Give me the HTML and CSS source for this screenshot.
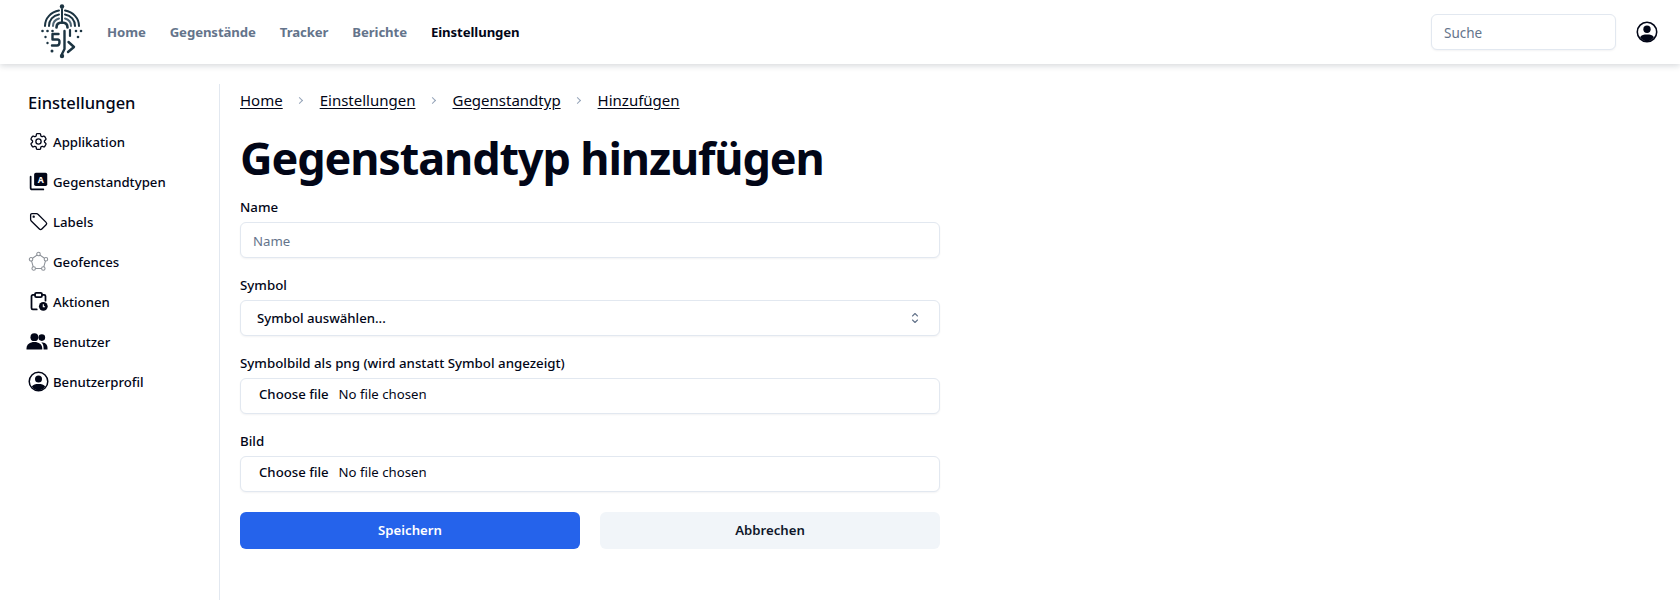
FILE: index.html
```html
<!DOCTYPE html>
<html lang="de">
<head>
<meta charset="utf-8">
<title>Gegenstandtyp hinzufügen</title>
<link rel="stylesheet" href="styles.css">
</head>
<body>
<header class="navbar">
  <svg class="logo" viewBox="0 0 44 56" fill="none" stroke="#1c3442" stroke-linecap="round">
    <circle cx="22" cy="2.500" r="2.200" fill="#1c3442" stroke="none"/>
    <path d="M22 5V19" stroke-width="2"/>
    <path d="M5 22C5 14 11 8 19 6.500M39 22C39 14 33 8 25 6.500" stroke-width="2"/>
    <path d="M9 22C9 16 13 11.500 19 10.500M35 22C35 16 31 11.500 25 10.500" stroke-width="2"/>
    <path d="M13 22C13 18 15.500 15.500 19 14.500M31 22C31 18 28.500 15.500 25 14.500" stroke="#4f6675" stroke-width="2"/>
    <path d="M16.500 23.500C16.500 20 19 18.500 22 18.500C25 18.500 27.500 20 27.500 23.500" stroke-width="2.600"/>
    <path d="M30 26V32" stroke-width="2.200"/>
    <path d="M18.500 30H12.500V35.500H17.500C19 35.500 19.500 36.500 19.500 38C19.500 40 18.500 41.500 17 41.500H12" stroke-width="2.400" stroke-linejoin="round"/>
    <path d="M24.500 27V45L22 50" stroke-width="2.400" stroke-linejoin="round"/>
    <path d="M28.500 38L34 43L28 48" stroke-width="2.400" stroke-linejoin="round"/>
    <g fill="#1c3442" stroke="none">
      <circle cx="2.500" cy="27" r="1.300"/><circle cx="7.500" cy="27" r="1.300"/><circle cx="12.500" cy="27" r="1.300"/>
      <circle cx="36" cy="27" r="1.300"/><circle cx="41" cy="27" r="1.300"/>
      <circle cx="5.500" cy="33" r="1.200"/><circle cx="7.500" cy="39" r="1.200"/><circle cx="38" cy="33" r="1.300"/>
      <circle cx="12" cy="47" r="1.500"/><circle cx="22" cy="52" r="2.200"/>
    </g>
  </svg>
  <nav class="nav-links">
    <a class="nav-link" href="#">Home</a>
    <a class="nav-link" href="#">Gegenstände</a>
    <a class="nav-link" href="#">Tracker</a>
    <a class="nav-link" href="#">Berichte</a>
    <a class="nav-link active" href="#">Einstellungen</a>
  </nav>
  <div class="nav-end">
    <input class="search" type="text" placeholder="Suche">
    <svg class="profile" viewBox="0 0 24 24"><use href="#i-user"/></svg>
  </div>
</header>

<svg class="defs" aria-hidden="true">
  <symbol id="i-user" viewBox="0 0 24 24">
    <circle cx="12" cy="12" r="10.600" fill="none" stroke="currentColor" stroke-width="1.700"/>
    <circle cx="12" cy="9" r="4" fill="currentColor"/>
    <path d="M4.400 17.600C6 15.400 8.500 14.800 12 14.800S18 15.400 19.600 17.600C17.700 20.600 15 22 12 22S6.300 20.600 4.400 17.600Z" fill="currentColor"/>
  </symbol>
</svg>

<div class="page">
  <aside class="sidebar">
    <h2 class="side-title">Einstellungen</h2>
    <ul class="side-list">
      <li class="side-item">
        <svg class="side-icon" viewBox="0 0 24 24" fill="none" stroke="currentColor" stroke-width="1.500" stroke-linecap="round" stroke-linejoin="round"><path d="M9.594 3.940c.09-.542.56-.94 1.110-.94h2.593c.55 0 1.020.398 1.110.94l.213 1.281c.063.374.313.686.645.870.074.04.147.083.22.127.325.196.72.257 1.075.124l1.217-.456a1.125 1.125 0 0 1 1.370.49l1.296 2.247a1.125 1.125 0 0 1-.26 1.431l-1.003.827c-.293.241-.438.613-.43.992a7.723 7.723 0 0 1 0 .255c-.008.378.137.75.43.991l1.004.827c.424.35.534.955.26 1.430l-1.298 2.247a1.125 1.125 0 0 1-1.369.491l-1.217-.456c-.355-.133-.75-.072-1.076.124a6.470 6.470 0 0 1-.22.128c-.331.183-.581.495-.644.869l-.213 1.281c-.09.543-.56.94-1.110.94h-2.594c-.55 0-1.019-.398-1.110-.94l-.213-1.281c-.062-.374-.312-.686-.644-.870a6.520 6.520 0 0 1-.22-.127c-.325-.196-.72-.257-1.076-.124l-1.217.456a1.125 1.125 0 0 1-1.369-.49l-1.297-2.247a1.125 1.125 0 0 1 .26-1.431l1.004-.827c.292-.24.437-.613.43-.991a6.932 6.932 0 0 1 0-.255c.007-.38-.138-.751-.43-.992l-1.004-.827a1.125 1.125 0 0 1-.26-1.430l1.297-2.247a1.125 1.125 0 0 1 1.370-.491l1.216.456c.356.133.751.072 1.076-.124.072-.044.146-.086.22-.128.332-.183.582-.495.644-.869l.214-1.280Z"/><circle cx="12" cy="12" r="3"/></svg>
        <span>Applikation</span>
      </li>
      <li class="side-item">
        <svg class="side-icon" viewBox="0 0 24 24"><path d="M3 6.500V19a2 2 0 0 0 2 2h12.500" fill="none" stroke="currentColor" stroke-width="2" stroke-linecap="round"/><rect x="7" y="2" width="15" height="15" rx="2" fill="currentColor"/><text class="icon-letter" x="14.500" y="13.500" text-anchor="middle">A</text></svg>
        <span>Gegenstandtypen</span>
      </li>
      <li class="side-item">
        <svg class="side-icon" viewBox="0 0 24 24" fill="none" stroke="currentColor" stroke-width="1.500" stroke-linejoin="round" stroke-linecap="round"><path d="M3 4.500A1.500 1.500 0 0 1 4.500 3h5.300c.6 0 1.200.24 1.600.66l9.300 9.300a2 2 0 0 1 0 2.800l-4.900 4.900a2 2 0 0 1-2.800 0l-9.300-9.300A2.250 2.250 0 0 1 3 9.800Z"/><circle cx="6.500" cy="6.500" r=".6"/></svg>
        <span>Labels</span>
      </li>
      <li class="side-item">
        <svg class="side-icon muted" viewBox="0 0 24 24" fill="none" stroke="currentColor" stroke-width="1.200"><path d="M12 3.500L20.500 9.500L17.500 20H6.500L3.500 9.500Z"/><g fill="#fff"><circle cx="12" cy="3.500" r="2"/><circle cx="20.500" cy="9.500" r="2"/><circle cx="17.500" cy="20" r="2"/><circle cx="6.500" cy="20" r="2"/><circle cx="3.500" cy="9.500" r="2"/></g></svg>
        <span>Geofences</span>
      </li>
      <li class="side-item">
        <svg class="side-icon" viewBox="0 0 24 24"><path d="M10 21H5.500A1.500 1.500 0 0 1 4 19.500V6A1.500 1.500 0 0 1 5.500 4.500H8M16 4.500H18.500A1.500 1.500 0 0 1 20 6V11" fill="none" stroke="currentColor" stroke-width="2" stroke-linecap="round"/><rect x="8" y="2" width="8" height="5" rx="1.500" fill="none" stroke="currentColor" stroke-width="2"/><circle cx="17.500" cy="17.500" r="5" fill="currentColor"/><path d="M17.500 15V18H19.500" fill="none" stroke="#fff" stroke-width="1.300"/></svg>
        <span>Aktionen</span>
      </li>
      <li class="side-item">
        <svg class="side-icon wide" viewBox="0 0 24 24" fill="currentColor"><circle cx="9" cy="7" r="4.500"/><circle cx="17.500" cy="7.500" r="3.800"/><path d="M0 20C0 15 4 12.500 9 12.500S18 15 18 20V21H0Z"/><path d="M19.500 21H24V19C24 15 21 13 17 12.800C18.800 14.400 19.500 16.800 19.500 19.500Z"/></svg>
        <span>Benutzer</span>
      </li>
      <li class="side-item">
        <svg class="side-icon" viewBox="0 0 24 24"><use href="#i-user"/></svg>
        <span>Benutzerprofil</span>
      </li>
    </ul>
  </aside>

  <main class="content">
    <nav class="crumbs">
      <a href="#">Home</a><span class="sep"></span>
      <a href="#">Einstellungen</a><span class="sep"></span>
      <a href="#">Gegenstandtyp</a><span class="sep"></span>
      <a href="#">Hinzufügen</a>
    </nav>
    <h1 class="title">Gegenstandtyp hinzufügen</h1>
    <form class="form">
      <div class="field">
        <label class="label" for="f-name">Name</label>
        <input class="control text-input" id="f-name" type="text" placeholder="Name">
      </div>
      <div class="field">
        <label class="label" for="f-sym">Symbol</label>
        <div class="select-wrap">
          <select class="control select" id="f-sym"><option>Symbol auswählen...</option></select>
          <svg class="select-arrow" viewBox="0 0 10 14" fill="none" stroke="#64748b" stroke-width="1.100" stroke-linecap="round" stroke-linejoin="round"><path d="M2.500 5L5 2.500L7.500 5M2.500 9L5 11.500L7.500 9"/></svg>
        </div>
      </div>
      <div class="field">
        <span class="label">Symbolbild als png (wird anstatt Symbol angezeigt)</span>
        <label class="control file">
          <input class="file-input" type="file">
          <span class="file-btn">Choose file</span>
          <span>No file chosen</span>
        </label>
      </div>
      <div class="field">
        <span class="label">Bild</span>
        <label class="control file">
          <input class="file-input" type="file">
          <span class="file-btn">Choose file</span>
          <span>No file chosen</span>
        </label>
      </div>
      <div class="actions">
        <button class="btn primary" type="button">Speichern</button>
        <button class="btn ghost" type="button">Abbrechen</button>
      </div>
    </form>
  </main>
</div>
</body>
</html>
```
FILE: styles.css
```css
* { box-sizing: border-box; }
html, body { margin: 0; height: 100%; }
body {
  background: #fff;
  color: #020617;
  font-family: "Noto Sans", "Open Sans", sans-serif;
  font-size: 13.500px;
  overflow: hidden;
}
a { color: inherit; }
.defs { display: none; }

.navbar {
  height: 64px;
  display: flex;
  align-items: center;
  padding: 0 22px 0 40px;
  background: #fff;
  box-shadow: 0 2px 6px rgba(15, 23, 42, 0.16);
}
.logo { width: 44px; height: 56px; flex: none; }
.nav-links { display: flex; gap: 24px; margin-left: 23px; }
.nav-link { font-weight: 700; font-size: 13.200px; color: #64748b; text-decoration: none; letter-spacing: -0.100px; }
.nav-link.active { color: #020617; }
.nav-end { margin-left: auto; display: flex; align-items: center; gap: 20px; }
.search {
  width: 185px;
  height: 36px;
  padding: 1px 12px 0;
  border: 1px solid #e2e8f0;
  border-radius: 6px;
  font: inherit;
  outline: none;
  box-shadow: 0 1px 2px rgba(15, 23, 42, 0.05);
}
.search::placeholder, .control::placeholder { color: #64748b; opacity: 1; }
.profile { width: 22px; height: 22px; color: #020617; }

.page { display: flex; height: 516px; margin-top: 20px; }
.sidebar { width: 220px; border-right: 1px solid #e2e8f0; padding: 7px 0 0 28px; flex: none; }
.side-title { margin: 0 0 7px; font-size: 16.500px; font-weight: 500; line-height: 24px; }
.side-list { list-style: none; margin: 0; padding: 0; }
.side-item { height: 40px; display: flex; align-items: center; gap: 4px; font-size: 13.200px; font-weight: 500; }
.side-icon { width: 21px; height: 21px; flex: none; margin-top: -2px; }
.side-icon.muted { color: #8b9097; }
.side-icon.wide { width: 22px; margin-left: -2px; margin-right: 1px; }
.icon-letter { font-size: 10px; font-weight: 700; fill: #fff; }

.content { padding: 4px 0 0 20px; width: 720px; }
.crumbs { display: flex; align-items: center; font-size: 15px; line-height: 24px; }
.crumbs a { text-underline-offset: 2px; }
.sep {
  width: 5px;
  height: 5px;
  margin: 0 17.500px 0 14.500px;
  border-top: 1px solid #94a3b8;
  border-right: 1px solid #94a3b8;
  transform: rotate(45deg);
}
.title { margin: 16px 0 0; font-size: 45px; line-height: 60px; font-weight: 700; letter-spacing: -1.130px; }
.form { display: flex; flex-direction: column; gap: 17px; margin-top: 9px; }
.field { display: flex; flex-direction: column; gap: 5px; }
.label { font-size: 13.300px; font-weight: 500; line-height: 20px; }
.control {
  width: 100%;
  height: 36px;
  padding: 0 12px;
  border: 1px solid #e2e8f0;
  border-radius: 6px;
  background: #fff;
  color: #020617;
  font-family: inherit;
  font-size: 13.200px;
  outline: none;
  box-shadow: 0 1px 2px rgba(15, 23, 42, 0.05);
}
.text-input { padding-top: 1px; }
.select-wrap { position: relative; }
.select { appearance: none; padding-left: 16px; font-weight: 500; }
.select-arrow { position: absolute; right: 20px; top: 11px; width: 10px; height: 14px; pointer-events: none; }
.file { display: flex; align-items: center; gap: 10px; padding: 0 0 4px 18px; }
.file-input { display: none; }
.file-btn { font-weight: 500; }
.actions { display: grid; grid-template-columns: 1fr 1fr; gap: 20px; margin-top: 3px; }
.btn { height: 37px; padding: 0 0 2px; border: 0; border-radius: 6px; font-family: inherit; font-size: 13.200px; font-weight: 600; }
.primary { background: #2563eb; color: #fff; }
.ghost { background: #f1f5f9; color: #0f172a; }
```
